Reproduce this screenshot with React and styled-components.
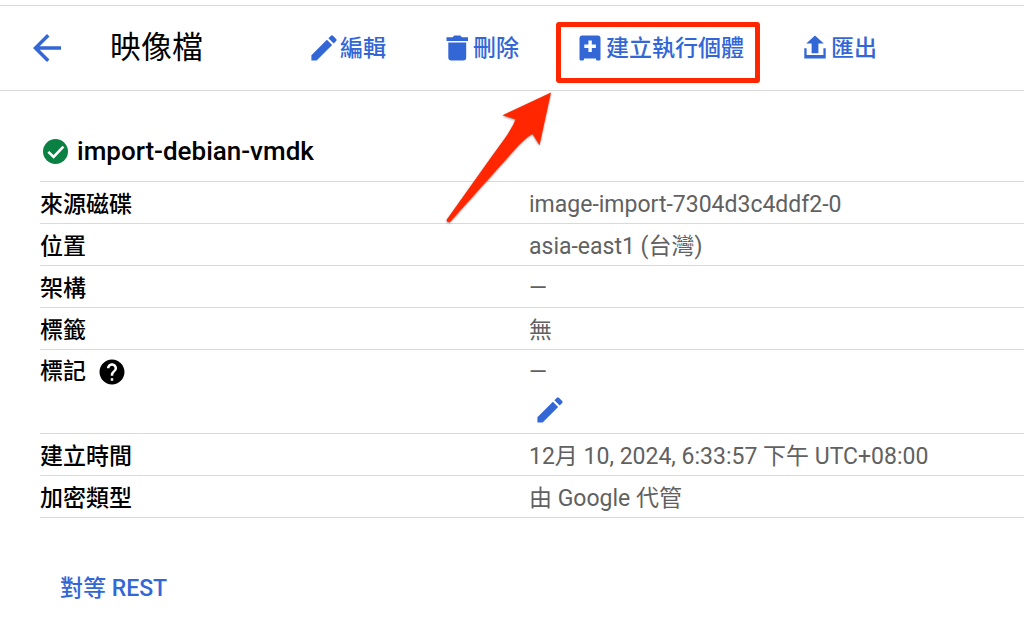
import styled, { createGlobalStyle } from 'styled-components'

const GlobalStyle = createGlobalStyle`
    * {
        box-sizing: border-box;
    }

    body {
        margin: 0;
        background: #fff;
        color: #000;
        font-family: Roboto, "Noto Sans CJK TC", sans-serif;
        font-size: 23px;
        line-height: 32px;
    }

    button {
        border: 0;
        padding: 0;
        background: none;
        font: inherit;
        color: #3367d6;
        cursor: pointer;
    }

    svg {
        display: block;
        flex: none;
    }
`;

const Header = styled.header`
    margin-top: 5px;
    height: 86px;
    padding-left: 26px;
    display: flex;
    align-items: center;
    border-top: 1px solid #dadada;
    border-bottom: 1px solid #dadada;
    white-space: nowrap;
`;

const Title = styled.h1`
    margin: 0 107px 0 42px;
    font-size: 31px;
    line-height: 40px;
    font-weight: 400;
`;

const Toolbar = styled.div`
    display: flex;
    align-items: center;
    gap: 57px;
`;

const ToolButton = styled.button`
    display: flex;
    align-items: center;
    gap: 2px;
    font-weight: 500;

    span {
        padding-top: 2px;
    }
`;

const Callout = styled.div`
    position: relative;

    .frame {
        position: absolute;
        inset: -9px -16px -18px -20px;
        border: 5px solid #ff2600;
        border-radius: 3px;
        pointer-events: none;
    }

    .arrow {
        position: absolute;
        top: 57px;
        left: -136px;
        pointer-events: none;
        filter: drop-shadow(0 1px 1px rgba(0, 0, 0, .4));
    }
`;

const Content = styled.main`
    padding: 40px 0 0 40px;
`;

const NameRow = styled.div`
    display: flex;
    align-items: center;
    gap: 8px;
    height: 40px;
    padding-left: 2px;
    margin-bottom: 10px;

    h2 {
        margin: 0;
        font-size: 26px;
        font-weight: 500;
    }
`;

const Details = styled.table`
    width: 100%;
    table-layout: fixed;
    border-collapse: collapse;
    border-top: 1px solid #dadada;

    th,
    td {
        height: 42px;
        padding: 7px 0 2px;
        border-bottom: 1px solid #dadada;
        text-align: left;
        vertical-align: top;
    }

    th {
        width: 489px;
        font-weight: 500;
    }

    td {
        color: #616161;
    }
`;

const LabelWithHelp = styled.div`
    display: flex;
    align-items: center;
    gap: 11px;
    height: 30px;

    button {
        color: #000;
    }
`;

const EditTags = styled.button`
    display: block;
    margin: 7px 0 7px 7px;
`;

const RestButton = styled.button`
    margin: 55px 0 32px 20px;
    font-weight: 500;
`;

const EditIcon = () => (
    <svg width="28" height="28" viewBox="2 2 20 20" fill="currentColor" aria-hidden="true">
        <path d="M3 17.25V21h3.75L17.81 9.94l-3.75-3.75L3 17.25zM20.71 7.04a1 1 0 0 0 0-1.41l-2.34-2.34a1 1 0 0 0-1.41 0l-1.83 1.83 3.75 3.75 1.83-1.83z" />
    </svg>
);

const DeleteIcon = () => (
    <svg width="28" height="28" viewBox="0 0 28 28" fill="currentColor" aria-hidden="true">
        <path d="M3.5 3.2H9.6L11.2 1.5H17.3L18.9 3.2H25V7H3.5z" />
        <path d="M5.3 8.4H23.2V23.5a3 3 0 0 1-3 3H8.3a3 3 0 0 1-3-3z" />
    </svg>
);

const CreateIcon = () => (
    <svg width="28" height="28" viewBox="0 0 28 28" fill="currentColor" aria-hidden="true">
        <path
            fillRule="evenodd"
            d="M6.3 1.5H21.7a2.8 2.8 0 0 1 2.8 2.8V25.3a1.2 1.2 0 0 1-1.2 1.2H21.2a1.2 1.2 0 0 1-1.2-1.2V24.6H8V25.3a1.2 1.2 0 0 1-1.2 1.2H4.7a1.2 1.2 0 0 1-1.2-1.2V4.3a2.8 2.8 0 0 1 2.8-2.8zM12.4 6.5V10.6H8.3V14H12.4V18H15.8V14H19.9V10.6H15.8V6.5z"
        />
    </svg>
);

const ExportIcon = () => (
    <svg width="28" height="28" viewBox="0 0 28 28" fill="currentColor" aria-hidden="true">
        <path d="M14 1.5L22.8 9.6H17.4V19.2H10.6V9.6H5.2z" />
        <path d="M3.3 14.3H5.6V21H22.4V14.3H24.7V24.5H3.3z" />
    </svg>
);

const details = [
    { label: '來源磁碟', value: 'image-import-7304d3c4ddf2-0' },
    { label: '位置', value: 'asia-east1 (台灣)' },
    { label: '架構', value: '—' },
    { label: '標籤', value: '無' },
    { label: '標記', value: '—', help: true, editable: true },
    { label: '建立時間', value: '12月 10, 2024, 6:33:57 下午 UTC+08:00' },
    { label: '加密類型', value: '由 Google 代管' },
];

export default function App() {
    return (
        <>
            <GlobalStyle />
            <Header>
                <button aria-label="返回">
                    <svg width="42" height="42" viewBox="0 0 24 24" fill="currentColor" aria-hidden="true">
                        <path d="M20 11H7.83l5.59-5.59L12 4l-8 8 8 8 1.41-1.41L7.83 13H20v-2z" />
                    </svg>
                </button>
                <Title>映像檔</Title>
                <Toolbar>
                    <ToolButton>
                        <EditIcon />
                        <span>編輯</span>
                    </ToolButton>
                    <ToolButton>
                        <DeleteIcon />
                        <span>刪除</span>
                    </ToolButton>
                    <Callout>
                        <ToolButton>
                            <CreateIcon />
                            <span>建立執行個體</span>
                        </ToolButton>
                        <div className="frame"></div>
                        <svg className="arrow" width="120" height="140" viewBox="440 88 120 140" fill="#ff2600" aria-hidden="true">
                            <path d="M551 92.5L502.5 115.2L515.5 119.5C511 131 502 142 492 156L446.8 219.5Q446 222.8 449.8 222.3L502 164C514 151 523 139 532.5 134L539.5 145.3z" />
                        </svg>
                    </Callout>
                    <ToolButton>
                        <ExportIcon />
                        <span>匯出</span>
                    </ToolButton>
                </Toolbar>
            </Header>

            <Content>
                <NameRow>
                    <svg width="27" height="27" viewBox="0 0 27 27" aria-hidden="true">
                        <circle cx="13.5" cy="13.5" r="12.5" fill="#0b8043" />
                        <path d="M6.3 13.9L11.6 19L21.4 8.6" fill="none" stroke="#fff" strokeWidth="2.6" />
                    </svg>
                    <h2>import-debian-vmdk</h2>
                </NameRow>

                <Details>
                    <tbody>
                        {details.map((item) => (
                            <tr key={item.label}>
                                <th scope="row">
                                    {item.help ? (
                                        <LabelWithHelp>
                                            {item.label}
                                            <button aria-label="說明">
                                                <svg width="30" height="30" viewBox="0 0 24 24" fill="currentColor" aria-hidden="true">
                                                    <path d="M12 2C6.48 2 2 6.48 2 12s4.48 10 10 10 10-4.48 10-10S17.52 2 12 2zm1 17h-2v-2h2v2zm2.07-7.75l-.9.92C13.45 12.9 13 13.5 13 15h-2v-.5c0-1.1.45-2.1 1.17-2.83l1.24-1.26c.37-.36.59-.86.59-1.41 0-1.1-.9-2-2-2s-2 .9-2 2H8c0-2.21 1.79-4 4-4s4 1.79 4 4c0 .88-.36 1.68-.93 2.25z" />
                                                </svg>
                                            </button>
                                        </LabelWithHelp>
                                    ) : (
                                        item.label
                                    )}
                                </th>
                                <td>
                                    {item.value}
                                    {item.editable && (
                                        <EditTags aria-label="編輯標記">
                                            <EditIcon />
                                        </EditTags>
                                    )}
                                </td>
                            </tr>
                        ))}
                    </tbody>
                </Details>

                <RestButton>對等 REST</RestButton>
            </Content>
        </>
    );
}
